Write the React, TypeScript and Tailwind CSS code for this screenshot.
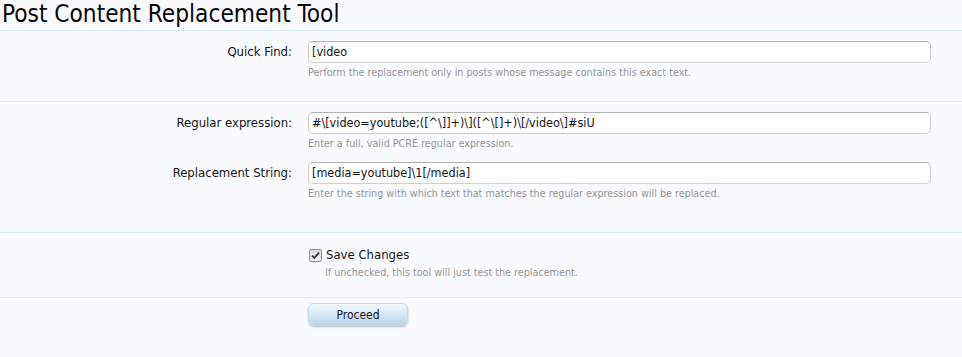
import React from "react";

const font = "font-['DejaVu_Sans_Condensed','DejaVu_Sans',sans-serif] font-stretch-condensed";

function Field({ label, value, hint, className = "" }: { label: string; value: string; hint: string; className?: string }) {
  return (
    <div className={`grid grid-cols-[292px_1fr] gap-x-[16px] pr-[31px] ${className}`}>
      <div className="text-right leading-[22px] text-[13px] text-[#141414]">{label}</div>
      <div>
        <div className="h-[22px] rounded-[5px] border border-[#cfcfcf] border-t-[#b3b3b3] bg-white pl-[3px] text-[12.5px] leading-[20px] text-[#141414] whitespace-nowrap overflow-hidden">
          {value}
        </div>
        <div className="mt-[3px] text-[10.7px] leading-[14px] text-[#969696]">{hint}</div>
      </div>
    </div>
  );
}

export default function App() {
  return (
    <div className={`min-h-[357px] w-[962px] bg-[#fafbfe] ${font}`}>
      <h1 className="h-[31px] border-b border-[#d7ebfa] pl-[2px] text-[24.2px] leading-[28px] text-[#050505] font-normal">
        Post Content Replacement Tool
      </h1>
      <section className="border-b border-[#d7ebfa] pt-[10px] pb-[21px]">
        <Field
          label="Quick Find:"
          value="[video"
          hint="Perform the replacement only in posts whose message contains this exact text."
        />
      </section>
      <section className="border-b border-[#d7ebfa] pt-[10px] pb-[31px]">
        <Field
          label="Regular expression:"
          value="#\[video=youtube;([^\]]+)\]([^\[]+)\[/video\]#siU"
          hint="Enter a full, valid PCRE regular expression."
        />
        <Field
          className="mt-[11px]"
          label="Replacement String:"
          value="[media=youtube]\1[/media]"
          hint="Enter the string with which text that matches the regular expression will be replaced."
        />
      </section>
      <section className="border-b border-[#d7ebfa] pt-[14px] pb-[17px]">
        <div className="grid grid-cols-[292px_1fr] gap-x-[16px]">
          <div />
          <div>
            <div className="flex items-center gap-[4px] pl-[1px] leading-[16px]">
              <span className="flex h-[13px] w-[13px] items-center justify-center rounded-[2px] border border-[#8f8f8f] bg-gradient-to-b from-[#d8d8d8] to-[#f4f4f4]">
                <svg width="9" height="9" viewBox="0 0 9 9">
                  <path d="M1 4.6 L3.4 7 L8 1.6" stroke="#333" strokeWidth="1.8" fill="none" />
                </svg>
              </span>
              <span className="text-[13px] text-[#141414]">Save Changes</span>
            </div>
            <div className="mt-[3px] pl-[17px] text-[10.7px] leading-[14px] text-[#969696]">
              If unchecked, this tool will just test the replacement.
            </div>
          </div>
        </div>
      </section>
      <section className="pt-[5px]">
        <div className="grid grid-cols-[292px_1fr] gap-x-[16px]">
          <div />
          <div>
            <button className="block h-[23px] w-[100px] rounded-[6px] border border-[#c4d8ea] bg-gradient-to-b from-[#f3f8fc] to-[#b9d4ea] text-[12px] leading-[20px] text-[#141414] shadow-[0_1px_2px_rgba(0,0,0,0.28)]">
              Proceed
            </button>
          </div>
        </div>
      </section>
    </div>
  );
}
